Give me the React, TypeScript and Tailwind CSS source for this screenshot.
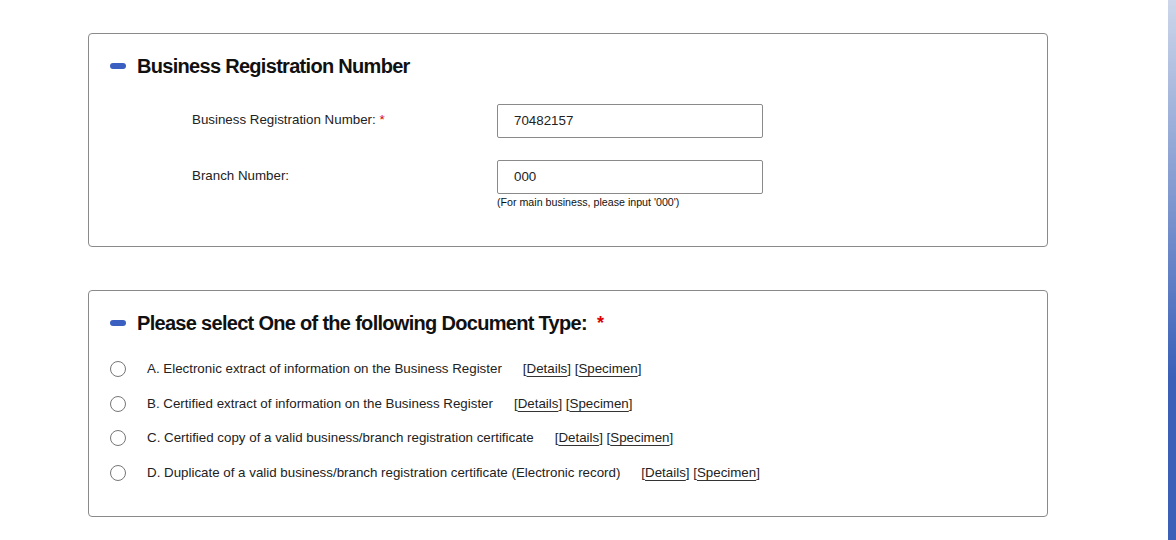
import React from "react";

const font = { fontFamily: '"Liberation Sans", Arial, sans-serif' };

function Pill() {
  return <span className="inline-block w-[16px] h-[6px] rounded-full bg-[#3b5fc0] mr-[11px] shrink-0" />;
}

function Link({ children }: { children: string }) {
  return (
    <span className="text-[#222]">
      [<span className="underline underline-offset-[3px] decoration-[#333]">{children}</span>]
    </span>
  );
}

const options = [
  "A. Electronic extract of information on the Business Register",
  "B. Certified extract of information on the Business Register",
  "C. Certified copy of a valid business/branch registration certificate",
  "D. Duplicate of a valid business/branch registration certificate (Electronic record)",
];

export default function App() {
  return (
    <div className="flex w-[1176px] h-[540px] bg-white overflow-hidden" style={font}>
      <div className="flex-1 pl-[88px] pt-[33px]">
        <div className="w-[960px] h-[214px] border border-[#8a8a8a] rounded-[4px] pl-[21px] pt-[20px]">
          <div className="flex items-center h-[24px]">
            <Pill />
            <h2 className="text-[20px] font-bold text-[#111] leading-[24px] tracking-[-0.7px]">Business Registration Number</h2>
          </div>
          <div className="mt-[26px] pl-[82px]">
            <div className="flex items-center h-[34px]">
              <div className="w-[305px] text-[13.33px] text-[#222] -mt-[2px]">
                Business Registration Number: <span className="text-[#d00]">*</span>
              </div>
              <div className="w-[266px] h-[34px] border border-[#8a8a8a] rounded-[2px] pl-[16px] flex items-center text-[13.33px] text-[#222]">
                70482157
              </div>
            </div>
            <div className="flex items-start mt-[22px]">
              <div className="w-[305px] h-[32px] flex items-center text-[13.33px] text-[#222]">Branch Number:</div>
              <div>
                <div className="w-[266px] h-[34px] border border-[#8a8a8a] rounded-[2px] pl-[16px] flex items-center text-[13.33px] text-[#222]">
                  000
                </div>
                <div className="text-[10.67px] text-[#111] leading-[14px] mt-[1px]">(For main business, please input '000')</div>
              </div>
            </div>
          </div>
        </div>

        <div className="w-[960px] h-[227px] mt-[43px] border border-[#8a8a8a] rounded-[4px] pl-[21px] pt-[20px]">
          <div className="flex items-center h-[24px]">
            <Pill />
            <h2 className="text-[20px] font-bold text-[#111] leading-[24px] tracking-[-0.7px]">
              Please select One of the following Document Type:
            </h2>
            <span className="text-[#d00] text-[18px] font-bold ml-[10px] leading-[24px]">*</span>
          </div>
          <div className="mt-[25px] flex flex-col gap-[16.7px]">
            {options.map((o) => (
              <div key={o} className="flex items-center h-[18px] text-[13.33px] text-[#222]">
                <span className="w-[16px] h-[16px] rounded-full border border-[#767676] bg-white shrink-0" />
                <span className="ml-[21px]">{o}</span>
                <span className="ml-[21px]">
                  <Link>Details</Link> <Link>Specimen</Link>
                </span>
              </div>
            ))}
          </div>
        </div>
      </div>
      <div className="w-[8px] h-full bg-[linear-gradient(to_bottom,#cdd6ea_0%,#3a60b8_70%,#3a60b8_100%)]" />
    </div>
  );
}
